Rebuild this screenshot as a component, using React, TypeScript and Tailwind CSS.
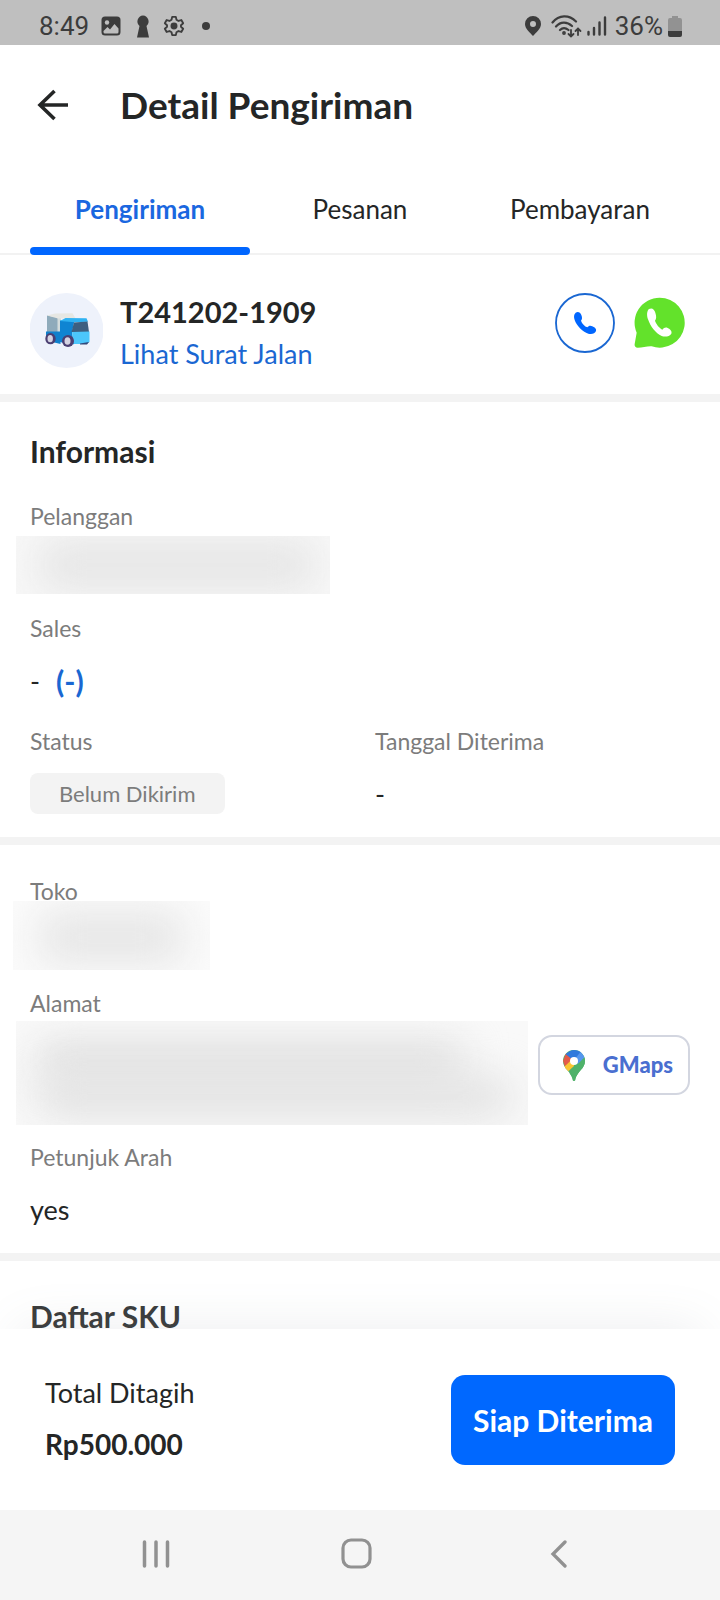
import type { ReactNode } from 'react';

function StatusBar() {
  return (
    <div className="flex h-[45px] items-center justify-between bg-[#bfbfbf] pt-[7px] pr-[38px] pl-[39px] font-[Roboto,sans-serif] text-[26px] leading-[36px] text-[#3c3c3c]">
      <div className="flex items-center">
        <span>8:49</span>
        <svg className="ml-[12px]" width="20" height="20" viewBox="0 0 20 20" aria-hidden="true">
          <rect x="0.5" y="0.5" width="19" height="19" rx="3.5" fill="#3c3c3c" />
          <circle cx="6" cy="6.5" r="2.2" fill="#bfbfbf" />
          <path d="M2.500 16V15l4-4L9 13.500 13.500 8l4 4.500V16a1.500 1.500 0 0 1-1.500 1.500H4A1.500 1.500 0 0 1 2.500 16Z" fill="#bfbfbf" />
        </svg>
        <svg className="ml-[15px]" width="14" height="23" viewBox="0 0 14 23" aria-hidden="true">
          <path d="M7 0.500a6 6 0 0 1 3.500 10.500L13 22.500H1L3.500 11A6 6 0 0 1 7 0.500Z" fill="#3c3c3c" />
        </svg>
        <svg className="ml-[13px]" width="22" height="22" viewBox="0 0 24 24" fill="none" stroke="#3c3c3c" strokeWidth="2" strokeLinejoin="round" aria-hidden="true">
          <path d="M10 2h4l.7 3.200 2.200 1.300 3.100-1 2 3.500-2.400 2.200v1.600L22 15l-2 3.500-3.100-1-2.200 1.300L14 22h-4l-.7-3.200-2.200-1.300-3.100 1L2 15l2.400-2.200v-1.600L2 9l2-3.500 3.100 1 2.200-1.300Z" />
          <circle cx="12" cy="12" r="2.800" fill="#3c3c3c" />
        </svg>
        <span className="ml-[17px] size-2 rounded-full bg-[#3c3c3c]" />
      </div>
      <div className="flex items-center">
        <svg width="16" height="20" viewBox="0 0 16 20" aria-hidden="true">
          <path fillRule="evenodd" d="M8 0a8 8 0 0 1 8 8c0 5-5 8.500-8 12C5 16.500 0 13 0 8a8 8 0 0 1 8-8Zm0 5a3 3 0 1 0 0 6 3 3 0 0 0 0-6Z" fill="#3c3c3c" />
        </svg>
        <svg className="ml-[10px]" width="31" height="23" viewBox="0 0 31 23" fill="none" stroke="#3c3c3c" strokeWidth="2.200" strokeLinecap="round" aria-hidden="true">
          <path d="M1.500 7.500C8-.5 18-.5 25 6.500M5 11.500c4.500-5 11-5 16-.5M9 15c2.500-2.500 5.500-2.500 8.500 0" />
          <circle cx="13" cy="18" r="0.800" fill="#3c3c3c" />
          <path d="M20 15v6.500m-2.500-2.500 2.500 2.500 2.500-2.500M27 20v-6.500M24.500 16l2.500-2.500 2.500 2.500" strokeWidth="1.800" />
        </svg>
        <svg className="ml-[5px]" width="20" height="20" viewBox="0 0 20 20" stroke="#3c3c3c" strokeWidth="2.400" strokeLinecap="round" aria-hidden="true">
          <path d="M1.500 16v2.500M7 12v6.500M12.500 6.500v12M18 1.500v17" />
        </svg>
        <span className="ml-[8px]">36%</span>
        <svg className="ml-[5px]" width="14" height="21" viewBox="0 0 14 21" aria-hidden="true">
          <path d="M4 0h6v2h2a2 2 0 0 1 2 2v11H0V4a2 2 0 0 1 2-2h2Z" fill="#929292" />
          <path d="M0 15h14v4a2 2 0 0 1-2 2H2a2 2 0 0 1-2-2Z" fill="#3c3c3c" />
        </svg>
      </div>
    </div>
  );
}

function TruckIcon() {
  return (
    <svg width="73" height="75" viewBox="0 0 73 75" aria-hidden="true" className="shrink-0">
      <ellipse cx="36.500" cy="37.500" rx="37" ry="37.500" fill="#eef2fb" />
      <path d="M17 22.500 28 24.500V40H17Z" fill="#8fabbb" />
      <path d="M27.500 24.500H31V40h-3.500Z" fill="#d3dcdc" />
      <path d="M17 22.500 25 20.500l17.500-.3 3 5L28 25.500Z" fill="#e6e7e3" />
      <path d="M16 38.500h14.500V51L16 47.500Z" fill="#1080cc" />
      <path d="M30 27.500H44.500L42 39.500 44 51.300 38 51l-8-2Z" fill="#0f84d2" />
      <path d="M30 28 35.500 25l21 .3 1.500 3.500-13.500.5Z" fill="#2fb2f2" />
      <path d="M44 29.500 57.500 28.500 59 39H41.500Z" fill="#3d5f80" />
      <path d="M42 39 59.500 38.500V49l-3 2H44Z" fill="#4cc6fb" />
      <path d="M50 51.500h7l2-2.500-9 1.500Z" fill="#31487a" />
      <ellipse cx="20.500" cy="45.700" rx="5.200" ry="5.600" fill="#4b3f72" />
      <ellipse cx="20.200" cy="45.700" rx="2.700" ry="3.600" fill="#d5d3e2" />
      <ellipse cx="38" cy="48" rx="6" ry="6" fill="#4b3f72" />
      <ellipse cx="37.500" cy="48" rx="3" ry="3.800" fill="#d5d3e2" />
    </svg>
  );
}

function MapsPin() {
  return (
    <svg width="22" height="31" viewBox="0 0 22 31" aria-hidden="true">
      <defs>
        <clipPath id="pin-shape">
          <path d="M11 0a11 11 0 0 1 11 11c0 8-8 10-9.500 18.500-.5 2-2.500 2-3 0C8 21 0 19 0 11A11 11 0 0 1 11 0Z" />
        </clipPath>
      </defs>
      <g clipPath="url(#pin-shape)">
        <rect width="22" height="31" fill="#4fb26a" />
        <path d="M0 11 3 3l8 8-8 9Z" fill="#e35a4a" />
        <path d="M1 17 11 7.500V16L4.500 22Z" fill="#f9c533" />
        <path d="M2.500 4 10-1h12l-11 12Z" fill="#3079dc" />
        <path d="M11 10 17.500 2 25 4l-4 4-6 6Z" fill="#5596ee" />
        <path d="M22 7 3.500 26.500H22Z" fill="#4fb26a" />
      </g>
      <circle cx="11" cy="11" r="4" fill="#fff" />
    </svg>
  );
}

function Label({ children }: { children: ReactNode }) {
  return <dt className="text-[23px] leading-[26px] text-[#7c7c7c]">{children}</dt>;
}

function Divider() {
  return <div className="h-2 bg-[#f3f3f3]" />;
}

export default function App() {
  return (
    <div className="flex h-screen flex-col bg-white font-[Lato,sans-serif] text-[#242626]">
      <StatusBar />
      <header className="flex h-[120px] shrink-0 items-center pl-[37px]">
        <button type="button" aria-label="Kembali">
          <svg width="32" height="32" viewBox="0 0 32 32" fill="none" stroke="#242626" strokeWidth="3.600" aria-hidden="true">
            <path d="M31 16H3M17.500 2 3 16l14.500 14" />
          </svg>
        </button>
        <h1 className="ml-[51px] text-[37px] leading-[48px] font-bold">Detail Pengiriman</h1>
      </header>
      <div role="tablist" className="flex h-[90px] shrink-0 border-b-2 border-[#f2f2f2] px-[30px] text-[26px] leading-[32px]">
        <button type="button" role="tab" aria-selected="true" className="relative flex-1 font-bold text-[#1a67e0]">
          Pengiriman
          <span className="absolute inset-x-0 -bottom-[2px] h-2 rounded-full bg-[#0066ff]" />
        </button>
        <button type="button" role="tab" aria-selected="false" className="flex-1">Pesanan</button>
        <button type="button" role="tab" aria-selected="false" className="flex-1">Pembayaran</button>
      </div>

      <main className="min-h-0 flex-1 overflow-hidden">
        <section className="flex items-start px-[30px] pt-[38px] pb-[17px]">
          <TruckIcon />
          <div className="ml-[17px] flex-1">
            <h2 className="text-[29px] leading-[38px] font-bold">T241202-1909</h2>
            <a href="#surat-jalan" className="block text-[27px] leading-[46px] text-[#1a67d2]">Lihat Surat Jalan</a>
          </div>
          <button type="button" aria-label="Telepon" className="size-[60px] shrink-0">
            <svg width="60" height="60" viewBox="30 24 180 180" aria-hidden="true">
              <circle cx="120" cy="114" r="87" fill="#fff" stroke="#1a67d2" strokeWidth="5.500" />
              <path d="M92 83C86 88 86 97 89 105c6 17 23 36 41 41 10 3 20 0 23-8 2-7-5-11-11-14s-11-2-15 3c-8-3-16-11-19-20 4-4 4-9 1-17-3-8-10-11-17-7Z" fill="#0066ff" />
            </svg>
          </button>
          <button type="button" aria-label="WhatsApp" className="mt-[4px] mr-[5px] ml-[19px] h-[52px] w-[51px] shrink-0">
            <svg width="51" height="52" viewBox="267 36 153 156" aria-hidden="true">
              <path d="M344 38a75 75 0 1 1-24 146c-12-1-28 4-42 4-7 0-10-4-9-11l6-34A75 75 0 0 1 344 38Z" fill="#63e22b" />
              <path d="M312 72C305 78 305 92 309 103c7 21 23 42 41 50 11 4 24 1 29-7 3-7-3-13-11-17-7-3-11 0-16 5-9-5-19-17-22-27 4-6 5-12 1-24-3-10-10-16-19-11Z" fill="#fff" />
            </svg>
          </button>
        </section>
        <Divider />
        <section className="px-[30px] pt-[29px] pb-[23px]">
          <h2 className="text-[30px] leading-[40px] font-bold">Informasi</h2>
          <dl className="mt-[32px]">
            <Label>Pelanggan</Label>
            <dd className="mt-[7px] -ml-[14px] h-[58px] w-[314px] overflow-hidden bg-[#f8f8f8] py-[4px] pr-[14px] pl-[22px]">
              <div className="h-full rounded-lg bg-[#e5e5e5] blur-[20px]" />
            </dd>
            <div className="mt-[21px]">
              <Label>Sales</Label>
              <dd className="mt-[22px] flex items-center gap-[16px] text-[27px] leading-[36px]">
                <span>-</span>
                <a href="#sales" className="text-[30px] font-bold text-[#1a67d2]">(-)</a>
              </dd>
            </div>
            <div className="mt-[29px] grid grid-cols-2 gap-[30px]">
              <div>
                <Label>Status</Label>
                <dd className="mt-[19px] flex">
                  <span className="rounded-lg bg-[#f3f3f3] px-[29px] py-[6px] text-[22px] leading-[29px] text-[#7c7c7c]">Belum Dikirim</span>
                </dd>
              </div>
              <div>
                <Label>Tanggal Diterima</Label>
                <dd className="mt-[19px] text-[27px] leading-[41px]">-</dd>
              </div>
            </div>
          </dl>
        </section>
        <Divider />
        <section className="px-[30px] pt-[33px] pb-[25px]">
          <dl>
            <Label>Toko</Label>
            <dd className="-mt-[3px] -ml-[17px] h-[69px] w-[197px] overflow-hidden bg-[#fbfbfb] pt-[10px] pr-[26px] pb-[6px] pl-[26px]">
              <div className="h-full rounded-lg bg-[#e6e6e6] blur-[20px]" />
            </dd>
            <div className="mt-[20px]">
              <Label>Alamat</Label>
              <dd className="mt-[5px] flex items-start gap-[10px]">
                <div className="-ml-[14px] h-[104px] min-w-0 flex-1 overflow-hidden bg-[#f9f9f9] pt-[22px] pr-[16px] pb-[10px] pl-[22px]">
                  <div className="h-[36px] w-[90%] rounded-lg bg-[#dddddd] blur-[20px]" />
                  <div className="h-[36px] rounded-lg bg-[#e0e0e0] blur-[20px]" />
                </div>
                <button type="button" className="mt-[14px] flex h-[60px] shrink-0 items-center gap-[18px] rounded-[14px] border-2 border-[#d3d6e0] pr-[15px] pl-[23px] text-[22px] leading-[30px] font-black text-[#4a6fd0]">
                  <MapsPin />
                  GMaps
                </button>
              </dd>
            </div>
            <div className="mt-[19px]">
              <Label>Petunjuk Arah</Label>
              <dd className="mt-[22px] text-[27px] leading-[36px]">yes</dd>
            </div>
          </dl>
        </section>
        <Divider />
        <section className="px-[30px] pt-[35px]">
          <h2 className="text-[30px] leading-[40px] font-bold text-[#3a3c3c]">Daftar SKU</h2>
        </section>
      </main>

      <footer className="relative flex shrink-0 items-center justify-between bg-white px-[45px] pt-[46px] pb-[45px] shadow-[0_-20px_50px_-20px_rgba(120,130,140,0.14)]">
        <div className="pb-[3px]">
          <p className="text-[27px] leading-[36px]">Total Ditagih</p>
          <p className="mt-[15px] text-[28px] leading-[36px] font-bold">Rp500.000</p>
        </div>
        <button type="button" className="h-[90px] rounded-[14px] bg-[#0068ff] px-[22px] text-[30px] leading-[40px] font-bold text-white">Siap Diterima</button>
      </footer>
      <nav className="relative grid h-[90px] shrink-0 grid-cols-[311px_90px_1fr] items-center bg-[#f5f5f5] pr-[5px] pb-[3px]">
        <button type="button" aria-label="Aplikasi terbaru" className="flex justify-center">
          <svg width="28" height="28" viewBox="0 0 28 28" stroke="#919191" strokeWidth="3.500" strokeLinecap="round" aria-hidden="true">
            <path d="M2.500 2v24M14 2v24M25.500 2v24" />
          </svg>
        </button>
        <button type="button" aria-label="Beranda" className="flex justify-center">
          <svg width="31" height="31" viewBox="0 0 31 31" fill="none" stroke="#919191" strokeWidth="3.200" aria-hidden="true">
            <rect x="2" y="2" width="27" height="27" rx="8" />
          </svg>
        </button>
        <button type="button" aria-label="Kembali ke layar sebelumnya" className="flex justify-center">
          <svg width="17" height="28" viewBox="0 0 17 28" fill="none" stroke="#919191" strokeWidth="3.300" strokeLinecap="round" aria-hidden="true">
            <path d="M15 2 3 14l12 12" />
          </svg>
        </button>
      </nav>
    </div>
  );
}
